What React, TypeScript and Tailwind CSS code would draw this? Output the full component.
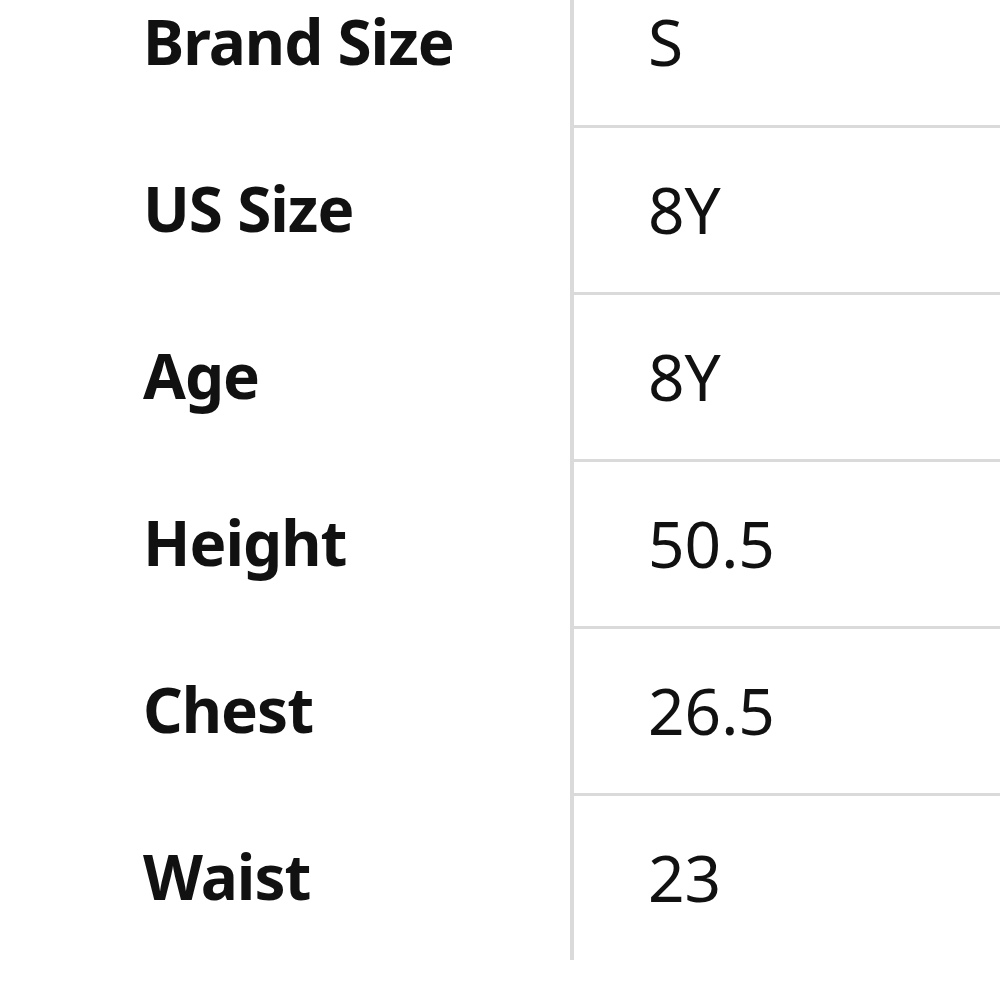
const rows = [
  { label: "Brand Size", value: "S" },
  { label: "US Size", value: "8Y" },
  { label: "Age", value: "8Y" },
  { label: "Height", value: "50.5" },
  { label: "Chest", value: "26.5" },
  { label: "Waist", value: "23" },
];

export default function App() {
  return (
    <div className="w-[1000px] h-[1000px] bg-white overflow-hidden font-['Noto_Sans',sans-serif] text-[#111111]">
      <div className="-mt-[42px]">
        {rows.map((row, i) => (
          <div key={row.label} className="flex h-[167px]">
            <div className="w-[570px] pl-[143px] flex items-center text-[62px] font-bold tracking-[-1px]">
              {row.label}
            </div>
            <div className="flex-1 border-l-4 border-[#dadada]">
              <div
                className={
                  i === 0
                    ? "h-full pl-[74px] flex items-center text-[64px]"
                    : "h-full pl-[74px] flex items-center text-[64px] border-t-[3px] border-[#dadada]"
                }
              >
                {row.value}
              </div>
            </div>
          </div>
        ))}
      </div>
    </div>
  );
}
